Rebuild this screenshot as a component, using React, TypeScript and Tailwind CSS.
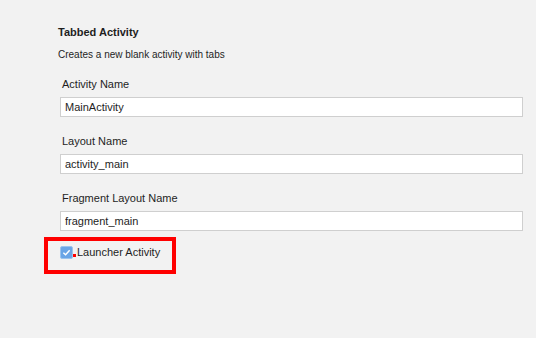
import React from "react";

const Field = ({ label, value }: { label: string; value: string }) => (
  <div className="flex flex-col">
    <label className="ml-[2px] h-[16px] text-[11px] leading-[16px] text-[#1e1e1e]">{label}</label>
    <input
      readOnly
      value={value}
      className="mt-[5px] h-[20px] w-[463px] border border-[#cfcfcf] bg-white px-[4px] text-[11px] text-[#1e1e1e] outline-none"
    />
  </div>
);

export default function App() {
  return (
    <div
      className="h-[338px] w-[536px] bg-[#f2f2f2] pt-[24px]"
      style={{ fontFamily: '"Liberation Sans", Arial, sans-serif' }}
    >
      <div className="ml-[58px] h-[16px] text-[11px] font-bold leading-[16px] text-[#1e1e1e]">Tabbed Activity</div>
      <div className="ml-[58px] mt-[7px] h-[16px] text-[10px] leading-[16px] text-[#1e1e1e]">
        Creates a new blank activity with tabs
      </div>
      <div className="ml-[60px] mt-[13px] flex flex-col gap-[16px]">
        <Field label="Activity Name" value="MainActivity" />
        <Field label="Layout Name" value="activity_main" />
        <Field label="Fragment Layout Name" value="fragment_main" />
      </div>
      <div className="ml-[44px] mt-[6px] flex h-[37px] w-[132px] items-start border-[4px] border-[#ff0000] pl-[12px] pt-[3px]">
        <div className="flex h-[16px] items-center whitespace-nowrap">
          <span className="flex h-[13px] w-[13px] items-center justify-center rounded-[2px] border border-[#9cc4ee] bg-[#6aa5e6]">
            <svg viewBox="0 0 10 10" className="h-[9px] w-[9px]">
              <path d="M1.5 5.2 L4 7.5 L8.5 2.5" fill="none" stroke="white" strokeWidth="1.6" />
            </svg>
          </span>
          <span className="mt-[6px] h-[3px] w-[3px] bg-[#ff0000]" />
          <span className="ml-[1px] text-[11px] text-[#1e1e1e]">Launcher Activity</span>
        </div>
      </div>
    </div>
  );
}
